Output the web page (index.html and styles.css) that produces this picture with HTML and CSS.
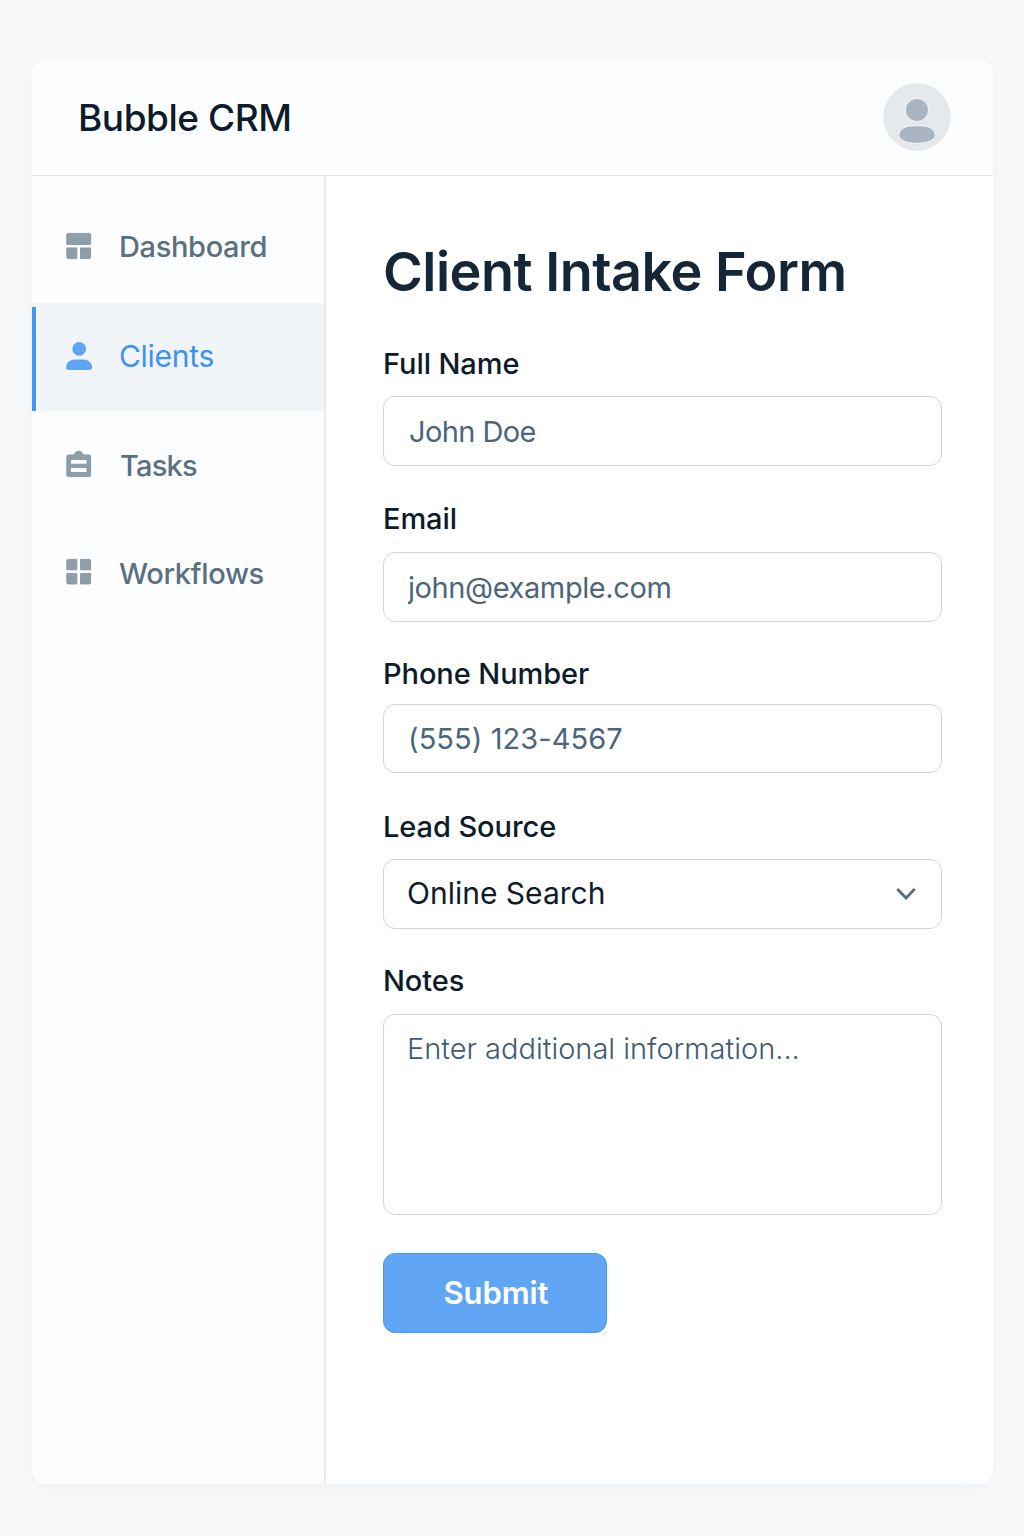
FILE: index.html
```html
<!DOCTYPE html>
<html lang="en">
<head>
<meta charset="utf-8">
<title>Bubble CRM</title>
<link rel="stylesheet" href="styles.css">
</head>
<body>
<div class="app">
  <header class="topbar">
    <div class="brand">Bubble CRM</div>
    <svg class="avatar" viewBox="0 0 68 68" aria-label="Account">
      <circle cx="34" cy="34" r="33.7" fill="#e5e9ee"/>
      <circle cx="34" cy="27" r="11.600" fill="#a9b6c2" stroke="#f4f6f9" stroke-width="1"/>
      <path d="M15.800 52.500C15.800 46.500 22 42.800 30 42.800H38C46 42.800 52.200 46.500 52.200 52.500C52.200 56.500 45 60.300 34 60.300S15.800 56.500 15.800 52.500Z" fill="#a9b6c2" stroke="#f4f6f9" stroke-width="1"/>
    </svg>
  </header>
  <div class="body">
    <nav class="sidebar">
      <a class="item dashboard">
        <svg class="icon" viewBox="0 0 26 28" fill="#8f9faa" stroke="#7b8d9a" stroke-width=".8">
          <path d="M2.400 1.400H23Q24.600 1.400 24.600 3V12.400H.800V3Q.800 1.400 2.400 1.400Z"/>
          <path d="M.800 15.900H10.800V26.600H2.400Q.800 26.600 .800 25Z"/>
          <path d="M14.600 15.900H24.600V25Q24.600 26.600 23 26.600H14.600Z"/>
        </svg>
        <span class="text">Dashboard</span>
      </a>
      <a class="item active">
        <svg class="icon" viewBox="0 0 26 28" fill="#60a5f5" stroke="#4a98f3" stroke-width=".8">
          <circle cx="13.200" cy="6.900" r="6.400"/>
          <path d="M.600 25.500C.600 20.800 4.300 18 9 18H17.200C21.900 18 25.600 20.800 25.600 25.500Q25.600 27.400 23.700 27.400H2.500Q.600 27.400 .600 25.500Z"/>
        </svg>
        <span class="text">Clients</span>
      </a>
      <a class="item tasks">
        <svg class="icon" viewBox="0 0 26 28">
          <path fill="#8f9faa" stroke="#7b8d9a" stroke-width=".8" fill-rule="evenodd" d="M2.600 4.900H8.400C8.700 2.500 10.400 1.200 12.700 1.200S16.700 2.500 17 4.900H22.800Q24.600 4.900 24.600 6.700V24.800Q24.600 26.600 22.800 26.600H2.600Q.800 26.600 .800 24.800V6.700Q.800 4.900 2.600 4.900ZM4.400 9.600V14.200H21V9.600ZM4.400 17.600V22.600H21V17.600Z"/>
        </svg>
        <span class="text">Tasks</span>
      </a>
      <a class="item workflows">
        <svg class="icon" viewBox="0 0 26 28" fill="#8f9faa" stroke="#7b8d9a" stroke-width=".8">
          <path d="M2.400 1.400H10.800V11.800H.800V3Q.800 1.400 2.400 1.400Z"/>
          <path d="M14.600 1.400H23Q24.600 1.400 24.600 3V11.800H14.600Z"/>
          <path d="M.800 15.400H10.800V26H2.400Q.800 26 .800 24.400Z"/>
          <path d="M14.600 15.400H24.600V24.400Q24.600 26 23 26H14.600Z"/>
        </svg>
        <span class="text">Workflows</span>
      </a>
    </nav>
    <main class="content">
      <h1 class="title">Client Intake Form</h1>
      <form class="form">
        <div class="field name">
          <label class="label" for="name">Full Name</label>
          <input class="control" id="name" type="text" placeholder="John Doe">
        </div>
        <div class="field email">
          <label class="label" for="email">Email</label>
          <input class="control" id="email" type="text" placeholder="john@example.com">
        </div>
        <div class="field phone">
          <label class="label" for="phone">Phone Number</label>
          <input class="control" id="phone" type="text" placeholder="(555) 123-4567">
        </div>
        <div class="field source">
          <label class="label">Lead Source</label>
          <div class="control select">
            <span class="value">Online Search</span>
            <svg class="chevron" viewBox="0 0 20 14" fill="none" stroke="#566d81" stroke-width="2.800"><path d="M1.300 2L10 11L18.700 2"/></svg>
          </div>
        </div>
        <div class="field notes">
          <label class="label" for="notes">Notes</label>
          <textarea class="control area" id="notes" placeholder="Enter additional information..."></textarea>
        </div>
        <button class="submit" type="button">Submit</button>
      </form>
    </main>
  </div>
</div>
</body>
</html>
```
FILE: styles.css
```css
* { box-sizing: border-box; }
body {
  margin: 0;
  height: 1536px;
  padding: 60px 31px 52px 32px;
  background: #f7f9fb;
  font-family: Inter, "Liberation Sans", sans-serif;
  color: #0d1b2a;
}
.app {
  height: 1424px;
  display: flex;
  flex-direction: column;
  overflow: hidden;
  border-radius: 14px;
  background: #fff;
  box-shadow: 0 4px 20px rgba(30, 50, 80, .04);
}
.topbar {
  height: 116px;
  flex: none;
  display: flex;
  align-items: center;
  justify-content: space-between;
  padding: 0 42px 2px 46px;
  background: #fcfdfe;
  border-bottom: 1px solid #e1e6ec;
}
.brand { padding-top: 2px; font-size: 37px; font-weight: 500; line-height: 48px; letter-spacing: -.45px; }
.avatar { width: 68px; height: 68px; }
.body { flex: 1; display: flex; }
.sidebar {
  width: 294px;
  flex: none;
  padding-top: 18px;
  background: #fcfdfe;
  border-right: 2px solid #e8ecf3;
}
.item {
  height: 108px;
  display: flex;
  align-items: center;
  gap: 27px;
  padding: 0 0 1px 34px;
  color: #5a7080;
  font-size: 29px;
  font-weight: 500;
  letter-spacing: -.35px;
}
.icon { width: 26px; height: 28px; flex: none; }
.dashboard { height: 109px; padding-bottom: 5px; }
.tasks { padding-bottom: 2px; }
.tasks .text { padding: 2px 0 0 1px; letter-spacing: -.8px; }
.workflows { padding-bottom: 2px; }
.workflows .text { padding-top: 2px; }
.active {
  position: relative;
  padding-bottom: 2px;
  background: #f1f4f9;
  color: #3b92f3;
  font-size: 30px;
  font-weight: 400;
  letter-spacing: -.3px;
}
.active::before {
  content: "";
  position: absolute;
  left: 0;
  top: 4px;
  bottom: 0;
  width: 4px;
  background: #4396f5;
}
.content { flex: 1; padding: 63px 51px 0 57px; }
.title {
  margin: 0 0 42px;
  font-size: 54px;
  font-weight: 600;
  line-height: 65px;
  letter-spacing: -.5px;
  color: #152636;
}
.form { display: flex; flex-direction: column; }
.field { display: flex; flex-direction: column; gap: 14px; margin-bottom: 35px; }
.label { font-size: 29px; font-weight: 500; line-height: 36px; letter-spacing: -.08px; }
.control {
  width: 100%;
  height: 70px;
  margin: 0;
  padding: 0 23px;
  border: 1.5px solid #cdd6e1;
  border-radius: 12px;
  outline: none;
  background: #fff;
  font: 400 29px/36px Inter, "Liberation Sans", sans-serif;
}
.control::placeholder { color: #4b657b; opacity: 1; }
.name .control { padding-left: 25px; }
.name .control::placeholder { letter-spacing: -.6px; }
.email { gap: 15px; margin-bottom: 34px; }
.email .control { padding-left: 24px; }
.email .control::placeholder { letter-spacing: -.4px; }
.phone { gap: 12px; margin-bottom: 36px; }
.phone .control { height: 69px; padding-left: 24px; }
.phone .control::placeholder { letter-spacing: .08px; }
.source { margin-bottom: 34px; }
.select { display: flex; align-items: center; justify-content: space-between; padding-right: 25px; font-size: 30px; }
.value { padding-bottom: 2px; }
.chevron { width: 20px; height: 14px; }
.notes { gap: 15px; margin-bottom: 38px; }
.area { height: 201px; padding-top: 16px; resize: none; }
.area::placeholder { color: #3f5a71; font-weight: 300; letter-spacing: 0; }
.submit {
  width: 224px;
  height: 80px;
  padding: 0 0 0 2px;
  border: 1px solid #4396f3;
  border-radius: 12px;
  background: #60a6f5;
  color: #fff;
  font: 600 31px/40px Inter, "Liberation Sans", sans-serif;
  letter-spacing: -.1px;
}
```
